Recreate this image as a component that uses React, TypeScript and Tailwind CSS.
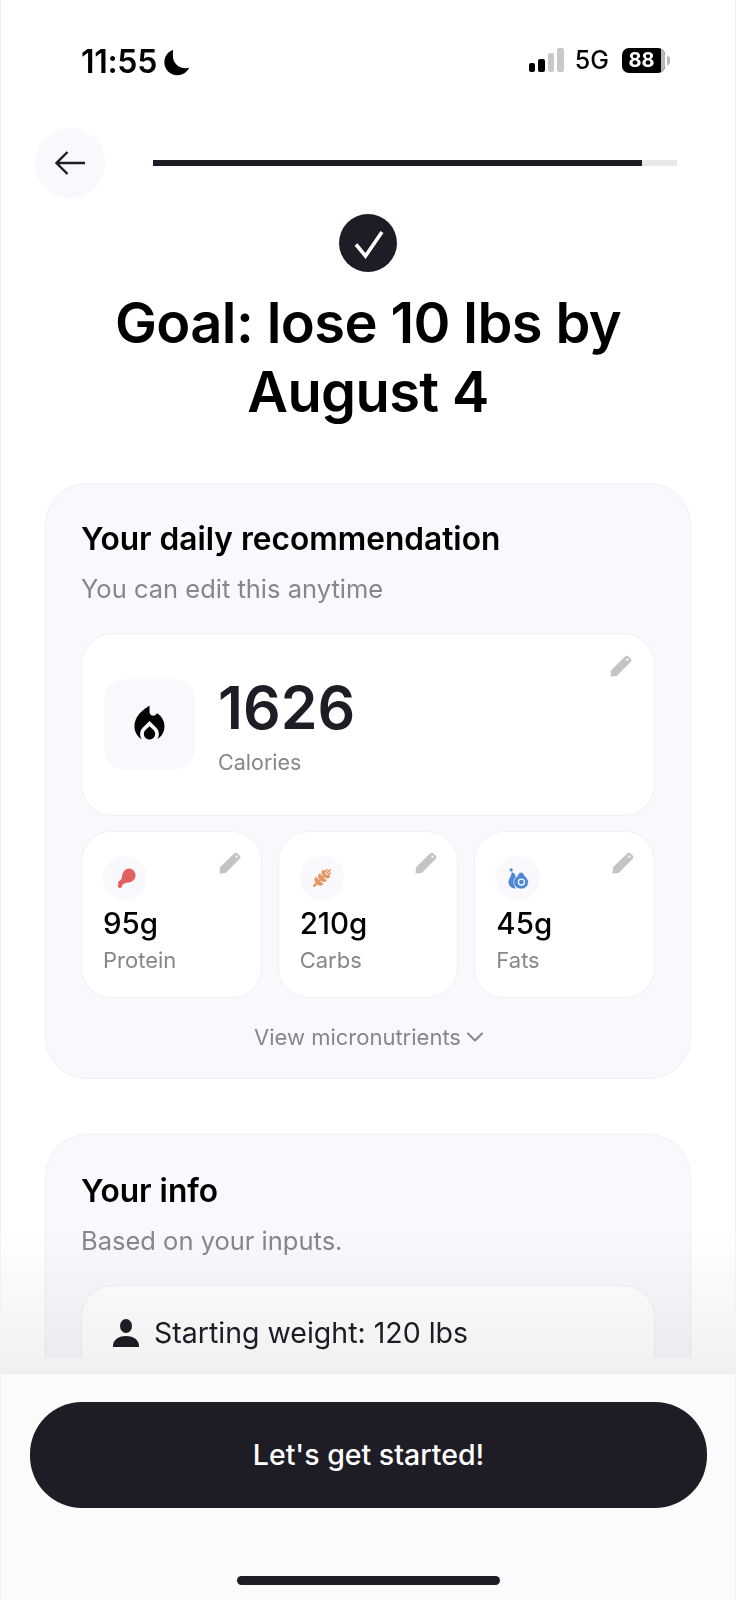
import { ChevronDown } from "lucide-react";
import { FaWheatAwn } from "react-icons/fa6";
import { MdLocalFireDepartment } from "react-icons/md";
import type { ReactNode } from "react";

function Drumstick() {
  return (
    <svg viewBox="0 0 20 20" className="w-[21px] h-[21px] fill-[#e0605e]">
      <path d="M13 .5a6.500 6.500 0 0 1 4.600 11.100c-2 2-5 2.400-7.300 2.400l-3.800 2.200a2 2 0 1 1-3-.8 2 2 0 0 1 .8-3L6.500 10c0-2.500.5-5 2-7A6.500 6.500 0 0 1 13 .5z" />
    </svg>
  );
}

function Avocado() {
  return (
    <svg viewBox="0 0 20 20" className="w-[21px] h-[21px]">
      <circle cx="3" cy="1.800" r="1.500" fill="#4f86d6" />
      <path d="M3.500 4c1.500 0 2.500 1 3.500 3C8 9 6 14 7 19.500c-3.500 0-6.500-2.500-6.500-6C.5 10 3.500 8 3.500 4z" fill="#4f86d6" />
      <path d="M12.500 4C14 4 15 5 16 7.500c2 2 3.500 3.500 3.500 6a7 6.500 0 0 1-14 0c0-2.500 1.500-4 3.500-6C10 5 11 4 12.500 4z" fill="#4f86d6" stroke="white" strokeWidth=".6" />
      <circle cx="12.800" cy="13.400" r="2.900" fill="none" stroke="white" strokeWidth="1.200" />
    </svg>
  );
}

const macros = [
  { value: "95g", label: "Protein", icon: <Drumstick /> },
  { value: "210g", label: "Carbs", icon: <FaWheatAwn className="w-[18px] h-[18px] text-[#e2955f]" /> },
  { value: "45g", label: "Fats", icon: <Avocado /> },
];

function Pencil({ className }: { className: string }) {
  return (
    <svg viewBox="0 0 24 24" className={`absolute w-[23px] h-[23px] ${className}`}>
      <path d="M1.500 22.500 2.200 16 16.500 1.700a3 3 0 0 1 4.200 0l1.600 1.600a3 3 0 0 1 0 4.200L8 21.800z" fill="#c4c4c6" />
      <circle cx="19.200" cy="4.800" r="1.200" fill="white" />
    </svg>
  );
}

function StatusBar() {
  return (
    <div className="h-[128px] pt-[44px] pl-[80px] pr-[65px] flex items-start justify-between">
      <div className="mt-[2px] flex items-center gap-[5px] h-[32px]">
        <span className="text-[32px] leading-[32px] font-semibold text-black tracking-[-0.3px]">11:55</span>
        <svg viewBox="0 0 24 24" className="w-[28px] h-[28px] fill-black">
          <path d="M9.500 1.500C5 3.200 2 7.400 2 12.200 2 18.400 7 23.400 13.200 23.400c4.400 0 8.300-2.600 10.100-6.400-1 .3-2 .4-3.100.4-6 0-10.900-4.800-10.900-10.800 0-1.900.1-3.600.2-5.100z" />
        </svg>
      </div>
      <div className="flex items-center h-[32px]">
        <div className="flex items-end gap-[3px] h-[24px]">
          <div className="w-[6.500px] h-[9px] rounded-[2px] bg-black" />
          <div className="w-[6.500px] h-[13px] rounded-[2px] bg-black" />
          <div className="w-[6.500px] h-[19px] rounded-[2px] bg-[#c9c9c9]" />
          <div className="w-[6.500px] h-[24px] rounded-[2px] bg-[#c9c9c9]" />
        </div>
        <span className="ml-[11px] text-[25px] leading-[32px] font-medium text-black">5G</span>
        <div className="ml-[13px] w-[43px] h-[25px] rounded-[7px] bg-black overflow-hidden flex">
          <div className="w-[39px] text-white text-[20px] leading-[25px] font-bold text-center">88</div>
          <div className="flex-1 bg-[#b9b9b9]" />
        </div>
        <div className="ml-[2px] w-[3px] h-[9px] rounded-r-[3px] bg-[#b9b9b9]" />
      </div>
    </div>
  );
}

function Card({ title, sub, children, pt, pb }: { title: string; sub: string; children: ReactNode; pt: string; pb: string }) {
  return (
    <section className={`mx-[44px] rounded-[42px] bg-[#f8f8fd] border border-[#f0f0f6] px-[35px] ${pt} ${pb}`}>
      <h2 className="text-[31.650px] leading-[40px] font-semibold text-black">{title}</h2>
      <p className="mt-[15px] text-[25.500px] leading-[30px] text-[#86868c]">{sub}</p>
      {children}
    </section>
  );
}

export default function App() {
  return (
    <div className="relative w-[736px] h-[1600px] overflow-hidden bg-white border-x border-[#f2f2f2] flex flex-col font-['Inter',sans-serif]">
      <StatusBar />

      <div className="flex items-center pl-[34px] pr-[58px] h-[70px]">
        <button className="w-[70px] h-[70px] rounded-full bg-[#f8f8fd] flex items-center justify-center">
          <svg viewBox="0 0 30 24" className="w-[30px] h-[24px] fill-none stroke-[#1e1c25] stroke-[2.4]">
            <path d="M1.500 12H30M12.500 1 1.500 12l11 11" />
          </svg>
        </button>
        <div className="ml-[48px] flex-1 h-[6px] bg-[#e8e8e8]">
          <div className="h-full w-[93.4%] bg-[#1e1c25]" />
        </div>
      </div>

      <div className="mt-[16px] flex justify-center">
        <div className="w-[58px] h-[58px] rounded-full bg-[#1e1c25]">
          <svg viewBox="0 0 58 58" className="w-[58px] h-[58px] fill-none stroke-white stroke-[3.6]">
            <path d="M17 30.500 26.500 42 43 18" />
          </svg>
        </div>
      </div>

      <h1 className="mt-[17px] text-center text-[56px] leading-[69px] font-semibold text-black tracking-[-0.6px]">
        Goal: lose 10 lbs by
        <br />
        August 4
      </h1>

      <div className="mt-[56px] h-[875px] overflow-hidden flex flex-col gap-[55px]">
        <Card title="Your daily recommendation" sub="You can edit this anytime" pt="pt-[35px]" pb="pb-[27px]">
          <div className="relative mt-[29px] h-[183px] rounded-[32px] bg-white border border-[#f0f0f6] flex items-center pl-[22px]">
            <Pencil className="top-[21px] right-[22px]" />
            <div className="w-[91px] h-[91px] rounded-[22px] bg-[#f8f8fd] flex items-center justify-center">
              <MdLocalFireDepartment className="w-[45px] h-[45px] text-black" />
            </div>
            <div className="ml-[23px] mt-[1px]">
              <div className="text-[59px] leading-[66px] font-semibold text-[#1e1c25]">1626</div>
              <div className="mt-[7px] text-[21.500px] leading-[28px] text-[#86868c]">Calories</div>
            </div>
          </div>
          <div className="mt-[15px] grid grid-cols-3 gap-[16px]">
            {macros.map((m) => (
              <div key={m.label} className="relative h-[167px] rounded-[30px] bg-white border border-[#f0f0f6] pl-[21px] pt-[24px]">
                <Pencil className="top-[20px] right-[20px]" />
                <div className="w-[44px] h-[44px] rounded-full bg-[#f8f8fd] flex items-center justify-center">{m.icon}</div>
                <div className="mt-[5px] text-[29.500px] leading-[36px] font-[550] text-black">{m.value}</div>
                <div className="mt-[5px] text-[22px] leading-[28px] text-[#86868c]">{m.label}</div>
              </div>
            ))}
          </div>
          <div className="mt-[25px] flex items-center justify-center text-[22px] leading-[28px] text-[#86868c]">
            View micronutrients
            <ChevronDown className="w-[28px] h-[28px] -mr-[7px]" strokeWidth={1.8} />
          </div>
        </Card>

        <Card title="Your info" sub="Based on your inputs." pt="pt-[36px]" pb="pb-[36px]">
          <div className="mt-[29px] rounded-[32px] bg-white border border-[#f0f0f6] pl-[30px] pt-[29px] h-[160px]">
            <div className="flex items-center gap-[14px]">
              <svg viewBox="0 0 28 28" className="w-[28px] h-[28px] fill-[#1e1c25]">
                <ellipse cx="14" cy="7" rx="6" ry="7" />
                <path d="M1 28c-.6-6.500 5-11 13-11s13.600 4.500 13 11z" />
              </svg>
              <span className="text-[28.500px] leading-[36px] text-[#1e1c25]">Starting weight: 120 lbs</span>
            </div>
          </div>
        </Card>
      </div>

      {/* fade over the scroll content, text stays dark */}
      <div className="absolute left-0 right-0 bottom-[227px] h-[145px] bg-gradient-to-b from-white to-[#f0f0f0] mix-blend-multiply pointer-events-none" />

      <footer className="absolute left-0 right-0 bottom-0 h-[227px] bg-[#fbfbfb] border-t border-[#ececec]">
        <button className="mt-[28px] ml-[29px] w-[677px] h-[106px] rounded-[52px] bg-[#1e1c25] text-white text-[28.500px] font-medium">
          Let's get started!
        </button>
        <div className="mt-[68px] mx-auto w-[263px] h-[9px] rounded-full bg-[#1e1c25]" />
      </footer>
    </div>
  );
}
